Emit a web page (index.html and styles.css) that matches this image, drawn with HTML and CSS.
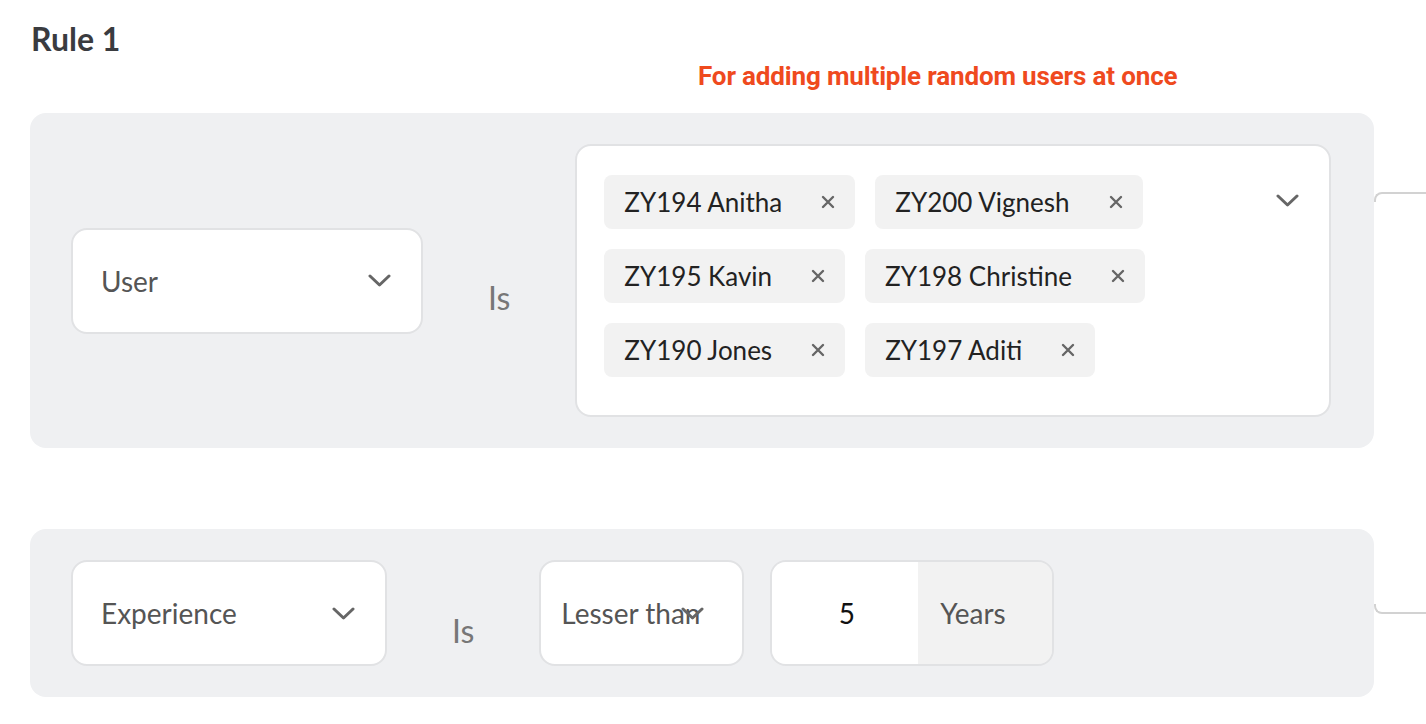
FILE: index.html
```html
<!DOCTYPE html>
<html lang="en">
<head>
	<meta charset="UTF-8">
	<title>Rule 1</title>
	<link rel="stylesheet" href="styles.css">
</head>
<body>
<div class="wrapper">
	<h1 class="rule-title">Rule 1</h1>
	<p class="rule-note">For adding multiple random users at once</p>

	<div class="rule-panel rule-panel-first">
		<div class="select select-user">
			<span class="select-text">User</span>
			<svg class="chevron" width="23" height="13" viewBox="0 0 23 13"><path d="M2 2 L11.5 11 L21 2" fill="none" stroke="#666" stroke-width="3" stroke-linecap="round" stroke-linejoin="round"/></svg>
		</div>
		<span class="op">Is</span>
		<div class="multi">
			<div class="chips">
				<span class="chip">ZY194 Anitha<svg class="chip-x" width="14" height="14" viewBox="0 0 14 14"><path d="M2 2 L12 12 M12 2 L2 12" stroke="#666" stroke-width="2.4" stroke-linecap="round"/></svg></span>
				<span class="chip">ZY200 Vignesh<svg class="chip-x" width="14" height="14" viewBox="0 0 14 14"><path d="M2 2 L12 12 M12 2 L2 12" stroke="#666" stroke-width="2.4" stroke-linecap="round"/></svg></span>
				<span class="chip">ZY195 Kavin<svg class="chip-x" width="14" height="14" viewBox="0 0 14 14"><path d="M2 2 L12 12 M12 2 L2 12" stroke="#666" stroke-width="2.4" stroke-linecap="round"/></svg></span>
				<span class="chip">ZY198 Christine<svg class="chip-x" width="14" height="14" viewBox="0 0 14 14"><path d="M2 2 L12 12 M12 2 L2 12" stroke="#666" stroke-width="2.4" stroke-linecap="round"/></svg></span>
				<span class="chip">ZY190 Jones<svg class="chip-x" width="14" height="14" viewBox="0 0 14 14"><path d="M2 2 L12 12 M12 2 L2 12" stroke="#666" stroke-width="2.4" stroke-linecap="round"/></svg></span>
				<span class="chip">ZY197 Aditi<svg class="chip-x" width="14" height="14" viewBox="0 0 14 14"><path d="M2 2 L12 12 M12 2 L2 12" stroke="#666" stroke-width="2.4" stroke-linecap="round"/></svg></span>
			</div>
			<svg class="chevron multi-chevron" width="23" height="13" viewBox="0 0 23 13"><path d="M2 2 L11.5 11 L21 2" fill="none" stroke="#666" stroke-width="3" stroke-linecap="round" stroke-linejoin="round"/></svg>
		</div>
	</div>

	<div class="rule-panel rule-panel-second">
		<div class="select select-exp">
			<span class="select-text">Experience</span>
			<svg class="chevron" width="23" height="13" viewBox="0 0 23 13"><path d="M2 2 L11.5 11 L21 2" fill="none" stroke="#666" stroke-width="3" stroke-linecap="round" stroke-linejoin="round"/></svg>
		</div>
		<span class="op">Is</span>
		<div class="select select-cmp">
			<span class="select-text">Lesser than</span>
			<svg class="chevron" width="23" height="13" viewBox="0 0 23 13"><path d="M2 2 L11.5 11 L21 2" fill="none" stroke="#666" stroke-width="3" stroke-linecap="round" stroke-linejoin="round"/></svg>
		</div>
		<div class="num-group">
			<span class="num-value">5</span>
			<span class="num-unit">Years</span>
		</div>
	</div>
</div>
</body>
</html>
```

FILE: styles.css
```css
*{
	margin: 0;
	padding: 0;
	box-sizing: border-box;
}
html, body{
	overflow: hidden;
}
body{
	background: #fff;
	font-family: Lato, "Noto Sans", sans-serif;
	color: #222;
}
.wrapper{
	padding: 20px 0 0 30px;
}
.rule-title{
	font-size: 32px;
	line-height: 38px;
	font-weight: 700;
	color: #3a3b3f;
	margin-left: 1px;
}
.rule-note{
	margin: 3px 0 0 668px;
	font-family: Roboto, "Liberation Sans", sans-serif;
	font-size: 26px;
	line-height: 30px;
	font-weight: 700;
	color: #ef4a1e;
	letter-spacing: -0.15px;
}
.rule-panel{
	position: relative;
	width: 1344px;
	display: flex;
	align-items: center;
	padding: 31px 41px;
	background: #eff0f2;
	border-radius: 16px;
}
.rule-panel-first{
	margin-top: 22px;
}
.rule-panel-second{
	margin-top: 81px;
}
/* connector line to the right side tree */
.rule-panel::after{
	content: "";
	position: absolute;
	left: 100%;
	width: 52px;
	height: 8px;
	border-left: 2px solid #d2d2d2;
}
.rule-panel-first::after{
	top: 79px;
	border-top: 2px solid #d2d2d2;
	border-top-left-radius: 8px;
}
.rule-panel-second::after{
	top: 75px;
	border-bottom: 2px solid #d2d2d2;
	border-bottom-left-radius: 8px;
}
.select{
	display: flex;
	align-items: center;
	height: 106px;
	padding: 0 30px 0 28px;
	background: #fff;
	border: 2px solid #e1e2e4;
	border-radius: 16px;
}
.select-text{
	flex: 1;
	font-size: 28px;
	color: #555;
	white-space: nowrap;
}
.chevron{
	display: block;
	flex-shrink: 0;
}
.select-user{
	width: 352px;
}
.select-exp{
	width: 316px;
}
.select-cmp{
	width: 205px;
	padding: 0 44px 0 20px;
}
.select-cmp .chevron{
	margin-left: -20px;
}
.op{
	margin: 34px 65px 0;
	font-size: 32px;
	color: #777;
}
.multi{
	display: flex;
	align-items: flex-start;
	width: 756px;
	padding: 29px 30px 38px 27px;
	background: #fff;
	border: 2px solid #e1e2e4;
	border-radius: 16px;
}
.chips{
	flex: 1;
	display: flex;
	flex-wrap: wrap;
	gap: 20px;
	margin-right: 20px;
}
.chip{
	display: flex;
	align-items: center;
	height: 54px;
	padding: 0 20px;
	background: #f2f2f2;
	border-radius: 8px;
	font-size: 26px;
	color: #222;
}
.chip-x{
	margin-left: 39px;
}
.multi-chevron{
	margin-top: 19px;
}
.num-group{
	display: flex;
	width: 284px;
	height: 106px;
	margin-left: 26px;
	border: 2px solid #e1e2e4;
	border-radius: 16px;
	overflow: hidden;
	font-size: 28px;
}
.num-value{
	width: 146px;
	display: flex;
	align-items: center;
	justify-content: center;
	padding-left: 3px;
	background: #fff;
	color: #111;
}
.num-unit{
	flex: 1;
	display: flex;
	align-items: center;
	padding-left: 22px;
	background: #f2f2f2;
	color: #555;
}
```
